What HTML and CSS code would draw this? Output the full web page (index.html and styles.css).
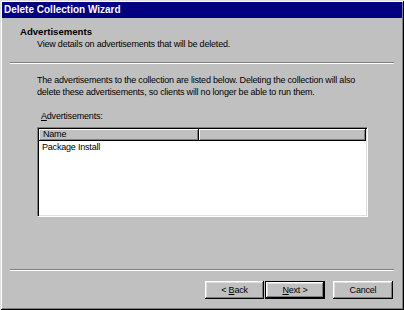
FILE: index.html
```html
<!DOCTYPE html>
<html lang="en">
<head>
    <meta charset="UTF-8">
    <meta name="viewport" content="width=device-width, initial-scale=1.0">
    <title>Delete Collection Wizard</title>
    <link rel="stylesheet" href="styles.css">
</head>
<body>
    <div class="window">
        <div class="titlebar">Delete Collection Wizard</div>

        <div class="header">
            <div class="header-title">Advertisements</div>
            <div class="header-sub">View details on advertisements that will be deleted.</div>
        </div>

        <div class="rule"></div>

        <div class="wizard-body">
            <p class="intro">The advertisements to the collection are listed below. Deleting the collection will also<br>delete these advertisements, so clients will no longer be able to run them.</p>

            <div class="field-label"><u>A</u>dvertisements:</div>

            <div class="listview">
                <div class="list-head">
                    <div class="col col-name">Name</div>
                    <div class="col col-rest"></div>
                </div>
                <div class="list-row">Package Install</div>
            </div>
        </div>

        <div class="rule rule-bottom"></div>

        <div class="buttons">
            <button class="btn btn-back">&lt; <u>B</u>ack</button>
            <button class="btn btn-next btn-default"><u>N</u>ext &gt;</button>
            <button class="btn btn-cancel">Cancel</button>
        </div>
    </div>
</body>
</html>
```

FILE: styles.css
```css
/* Base styles */
* {
    margin: 0;
    padding: 0;
    box-sizing: border-box;
}

body {
    background-color: #c0c0c0;
    color: #000000;
    font-family: "Liberation Sans", Arial, sans-serif;
    font-size: 9px;
    letter-spacing: -0.2px;
}

/* Window frame */
.window {
    width: 404px;
    height: 310px;
    display: flex;
    flex-direction: column;
    padding: 2px;
    background: #c0c0c0;
    box-shadow: inset 1px 1px #dfdfdf, inset -1px -1px #000000,
                inset 2px 2px #ffffff, inset -2px -2px #808080;
}

.titlebar {
    height: 16px;
    padding-left: 2px;
    background: #000080;
    color: #ffffff;
    font-weight: 700;
    font-size: 10px;
    letter-spacing: 0;
    line-height: 16px;
}

/* Wizard header */
.header {
    padding: 8px 0 0 18px;
}

.header-title {
    font-weight: 700;
    font-size: 9.6px;
    letter-spacing: 0;
    line-height: 12px;
}

.header-sub {
    padding-left: 17px;
    line-height: 12px;
    white-space: nowrap;
}

.rule {
    height: 2px;
    margin: 12px 8px 0;
    border-top: 1px solid #808080;
    border-bottom: 1px solid #ffffff;
}

.rule-bottom {
    margin-top: 0;
}

/* Wizard page */
.wizard-body {
    flex: 1;
    padding: 10px 0 0 35px;
}

.intro {
    line-height: 12px;
    white-space: nowrap;
}

.field-label {
    margin-top: 12px;
    padding-left: 4px;
    line-height: 12px;
}

.listview {
    width: 331px;
    height: 90px;
    margin-top: 5px;
    padding: 1px;
    background: #ffffff;
    border: 1px solid;
    border-color: #808080 #ffffff #ffffff #808080;
    box-shadow: inset 1px 1px #000000, inset -1px -1px #dfdfdf;
}

.list-head {
    display: flex;
    height: 12px;
}

.col {
    height: 12px;
    padding-left: 4px;
    background: #c0c0c0;
    line-height: 11px;
    border-right: 1px solid #000000;
    border-bottom: 1px solid #000000;
    box-shadow: inset 1px 1px #ffffff, inset -1px -1px #808080;
}

.col-name {
    width: 160px;
}

.col-rest {
    flex: 1;
}

.list-row {
    padding-left: 3px;
    line-height: 12px;
}

/* Button row */
.buttons {
    display: flex;
    justify-content: flex-end;
    margin: 10px 0 9px;
    padding-right: 9px;
}

.btn {
    width: 60px;
    height: 18px;
    border: none;
    background: #c0c0c0;
    color: #000000;
    font-family: inherit;
    font-size: 9px;
    letter-spacing: -0.2px;
    line-height: 18px;
    box-shadow: inset -1px -1px #000000, inset 1px 1px #ffffff,
                inset -2px -2px #808080, inset 2px 2px #dfdfdf;
}

.btn-back {
    width: 59px;
}

.btn-next {
    margin-left: 1px;
}

.btn-default {
    border: 1px solid #000000;
    line-height: 16px;
}

.btn-cancel {
    margin-left: 8px;
}
```
